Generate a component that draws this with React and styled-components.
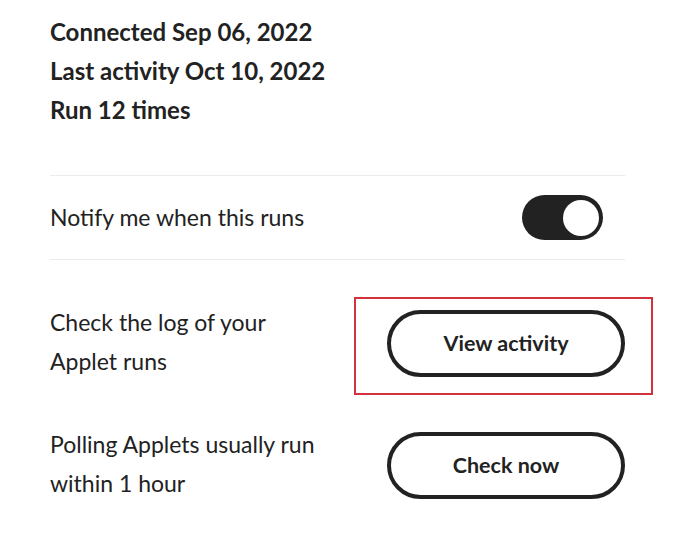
import React from "react";
import styled, { createGlobalStyle } from "styled-components";

const Global = createGlobalStyle`
  html, body { margin: 0; padding: 0; background: #fff; }
  body { font-family: Lato, "Noto Sans", sans-serif; color: #222; }
`;

const Page = styled.div`
  width: 575px;
  padding: 12px 0 0 50px;
`;

const Stats = styled.div`
  display: flex;
  flex-direction: column;
  margin-bottom: 46px;
`;

const Stat = styled.div`
  font-size: 24px;
  font-weight: 700;
  line-height: 39px;
`;

const Divider = styled.hr`
  border: 0;
  border-top: 1px solid #ebebeb;
  margin: 0;
`;

const ToggleRow = styled.div`
  display: flex;
  align-items: center;
  justify-content: space-between;
  height: 83px;
  padding-right: 22px;
`;

const Label = styled.div`
  font-size: 23px;
  line-height: 39px;
  max-width: ${(p) => p.$max || "none"};
`;

const Toggle = styled.div`
  width: 81px;
  height: 45px;
  border-radius: 23px;
  background: #222;
  display: flex;
  align-items: center;
  justify-content: flex-end;
  padding: 0 4px;
  box-sizing: border-box;
`;

const Knob = styled.div`
  width: 36px;
  height: 36px;
  border-radius: 50%;
  background: #fff;
`;

const ActionRow = styled.div`
  display: flex;
  align-items: center;
  justify-content: space-between;
  margin-top: ${(p) => p.$top}px;
`;

const ButtonWrap = styled.div`
  position: relative;
  margin-top: 2px;
`;

const Highlight = styled.div`
  position: absolute;
  left: -33px;
  right: -28px;
  top: -13px;
  bottom: -18px;
  border: 2px solid #d2323c;
  pointer-events: none;
`;

const Button = styled.button`
  width: 238px;
  height: 67px;
  border: 4px solid #222;
  border-radius: 34px;
  background: #fff;
  color: #222;
  font-family: Lato, "Noto Sans", sans-serif;
  font-size: 21.5px;
  font-weight: 700;
  cursor: pointer;
  display: block;
`;

export default function App() {
  return (
    <>
      <Global />
      <Page>
        <Stats>
          <Stat>Connected Sep 06, 2022</Stat>
          <Stat>Last activity Oct 10, 2022</Stat>
          <Stat>Run 12 times</Stat>
        </Stats>
        <Divider />
        <ToggleRow>
          <Label>Notify me when this runs</Label>
          <Toggle>
            <Knob />
          </Toggle>
        </ToggleRow>
        <Divider />
        <ActionRow $top={43}>
          <Label $max="280px">Check the log of your Applet runs</Label>
          <ButtonWrap>
            <Button>View activity</Button>
            <Highlight />
          </ButtonWrap>
        </ActionRow>
        <ActionRow $top={44}>
          <Label $max="280px">Polling Applets usually run within 1 hour</Label>
          <ButtonWrap>
            <Button>Check now</Button>
          </ButtonWrap>
        </ActionRow>
      </Page>
    </>
  );
}
